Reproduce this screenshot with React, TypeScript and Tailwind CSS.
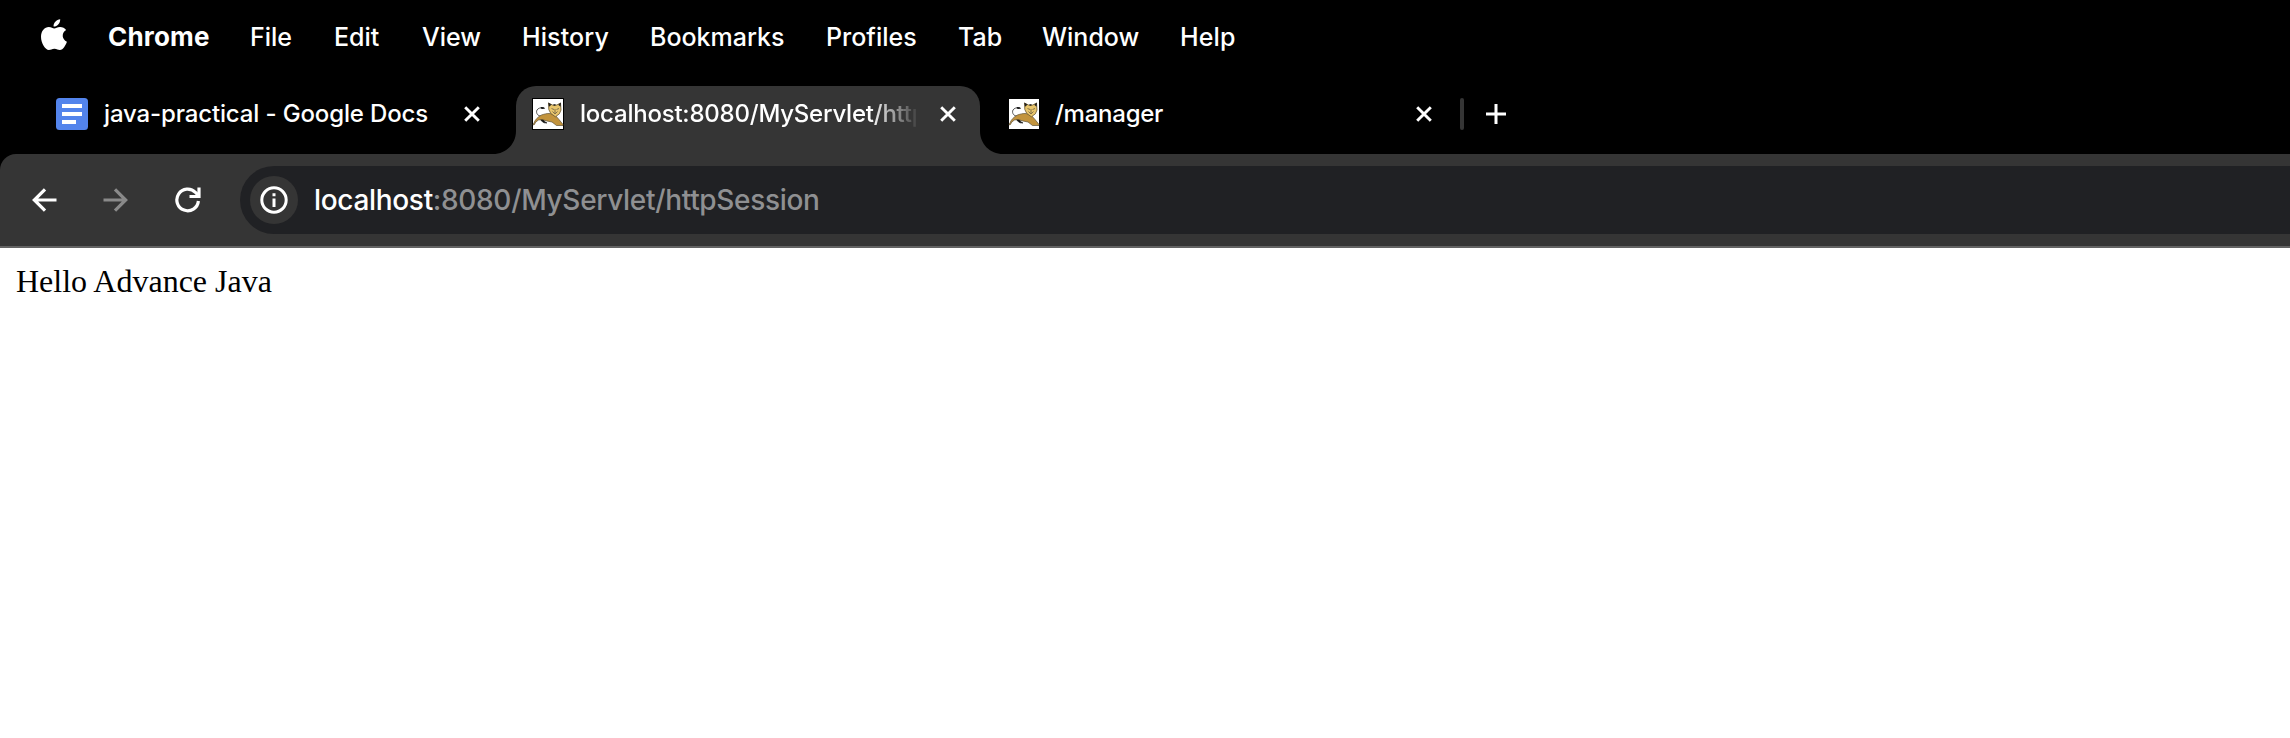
import React from "react";

const menuItems = [
  { label: "Chrome", className: "w-[142px] font-bold text-[26px] tracking-[0.2px]" },
  { label: "File", className: "w-[84px]" },
  { label: "Edit", className: "w-[88px]" },
  { label: "View", className: "w-[100px]" },
  { label: "History", className: "w-[128px] tracking-[0.1px]" },
  { label: "Bookmarks", className: "w-[176px]" },
  { label: "Profiles", className: "w-[132px]" },
  { label: "Tab", className: "w-[84px]" },
  { label: "Window", className: "w-[138px]" },
  { label: "Help", className: "w-[80px] tracking-[0.1px]" },
];

function AppleLogo() {
  return (
    <svg viewBox="0 0 26 32" className="h-8 w-[26px]" fill="#fff">
      <path d="M19.2 0.2c.2 3.7-2.8 7.5-6.6 7.4-.4-3.600 2.900-7 6.600-7.400z" />
      <path d="M13.300 9.500c1.400 0 3-1.600 5.800-1.600 2.400 0 4.700 1.200 6 3.200-5 3-4.200 9.600 .8 11.600-.9 2.700-3.700 8.300-7 8.300-2.100 0-2.900-1.300-5.500-1.300s-3.500 1.300-5.500 1.300C4.300 31 0 24.300 0 17.800 0 11.800 3.700 8 7.800 8c2.500 0 4.100 1.500 5.500 1.500z" />
    </svg>
  );
}

function DocsIcon() {
  return (
    <svg viewBox="0 0 32 32" className="h-8 w-8 shrink-0">
      <rect width="32" height="32" rx="3.500" fill="#5384ec" />
      <path d="M6 6h20v4H6zM6 14h20v4H6zM6 22h14v4H6z" fill="#fff" />
    </svg>
  );
}

function TomcatIcon() {
  return (
    <svg viewBox="0 0 32 32" className="h-8 w-8 shrink-0">
      <rect width="32" height="32" fill="#000" />
      <rect x="1" y="1" width="30" height="30" fill="#fff" />
      <path d="M9.500 18C6 18.500 3.500 15 5 12c1.200-2 3.500-2.300 6-2" fill="none" stroke="#555" strokeWidth="1" />
      <path d="M8.500 9l3.500.2 1 1.500-3.500.3z" fill="#111" />
      <path d="M8 20.500l3.500.5 1 2.500 2.500 1.500-3-.2-2.500-1.800z" fill="#111" stroke="#111" strokeWidth=".6" />
      <path d="M1 26.500l1-1.500c1-3 3.500-6 7.500-8 3-1 5-1.500 7.500-1.500l5 .5 5 5.500 4 5v1h-6.500l-4.500-3.500-5-1-5-1.500-3.500.5-2.500 1.800-2 3.200z" fill="#c2933c" stroke="#5e5236" strokeWidth=".7" />
      <path d="M16.500 5l4 2h4.300l3.700-2 .5 7-1.600 3.800-4 3-4.600-3.300-2-4z" fill="#e8c56c" stroke="#6a572e" strokeWidth=".8" />
      <path d="M16.300 4.500l3.200 2.200-2.500 2zM29 4.500l-2.800 2.200 2.300 2zM21.500 6.300h2v1.500h-2z" fill="#222" />
      <path d="M19.500 10.500l2.500 1M27 10.500l-2.500 1M20.500 13.500l2.500 2.500 2.500-2.500M23 11v4" fill="none" stroke="#776947" strokeWidth=".9" />
    </svg>
  );
}

function CloseIcon() {
  return (
    <svg viewBox="0 0 16 16" className="h-4 w-4 shrink-0" fill="none" stroke="#fff" strokeWidth="2.900">
      <path d="M1.200 1.200l13.600 13.600M14.800 1.200L1.200 14.800" />
    </svg>
  );
}

function MenuBar() {
  return (
    <nav className="flex h-[86px] items-start pl-[41px] text-[25px] font-medium leading-[30px] text-white">
      <div className="w-[67px] pt-[19px]">
        <AppleLogo />
      </div>
      {menuItems.map((m) => (
        <div key={m.label} className={`shrink-0 whitespace-nowrap pt-[22px] leading-[30px] ${m.className}`}>
          {m.label}
        </div>
      ))}
    </nav>
  );
}

function TabStrip() {
  return (
    <div className="flex h-[68px] text-[24px] font-[450] leading-[30px] tracking-[-0.14px] text-white">
      <div className="flex h-14 w-[493px] items-center pl-14">
        <DocsIcon />
        <span className="ml-4 w-[345px] whitespace-nowrap">java-practical - Google Docs</span>
        <span className="ml-[15px] flex"><CloseIcon /></span>
      </div>
      <svg viewBox="0 0 23 23" className="h-[23px] w-[23px] self-end" fill="#353535">
        <path d="M0 23C13 23 23 13 23 0V23Z" />
      </svg>
      <div className="flex w-[464px] rounded-t-[20px] bg-[#353535]">
        <div className="flex h-14 items-center pl-4">
          <TomcatIcon />
          <span className="ml-4 w-[336px] overflow-hidden whitespace-nowrap tracking-[-0.22px] [mask-image:linear-gradient(to_right,#000_290px,transparent_340px)]">
            localhost:8080/MyServlet/httpSession
          </span>
          <span className="ml-6 flex"><CloseIcon /></span>
        </div>
      </div>
      <svg viewBox="0 0 23 23" className="h-[23px] w-[23px] self-end" fill="#353535">
        <path d="M23 23C10 23 0 13 0 0V23Z" />
      </svg>
      <div className="flex h-14 items-center pl-[5px]">
        <TomcatIcon />
        <span className="ml-[15px] w-[361px] whitespace-nowrap tracking-[-0.25px]">/manager</span>
        <CloseIcon />
        <span className="ml-7 h-8 w-1 rounded-full bg-[#353535]" />
        <svg viewBox="0 0 20 20" className="ml-[22px] h-5 w-5" fill="none" stroke="#fff" strokeWidth="3">
          <path d="M10 0v20M0 10h20" />
        </svg>
      </div>
    </div>
  );
}

function Toolbar() {
  return (
    <div className="flex h-[94px] items-start rounded-tl-[16px] border-b-2 border-[#636363] bg-[#353535] pt-3">
      <div className="flex h-[68px] w-60 shrink-0 items-center pl-8">
        <svg viewBox="0 0 25 24" className="h-6 w-[25px]" fill="none" stroke="#fff" strokeWidth="3.200">
          <path d="M24.500 12H2.300M13 1.300L2.300 12 13 22.700" />
        </svg>
        <svg viewBox="0 0 25 24" className="ml-[46px] h-6 w-[25px]" fill="none" stroke="#8a8a8a" strokeWidth="3.200">
          <path d="M.5 12h22.200M12 1.300L22.700 12 12 22.700" />
        </svg>
        <svg viewBox="0 0 26 26" className="ml-[47px] h-[26px] w-[26px]" fill="none" stroke="#fff" strokeWidth="3.200">
          <path d="M23.400 14A10.800 10.800 0 1 1 20.500 5.500L23.500 8.500" />
          <path d="M24 .5v9H14.500" />
        </svg>
      </div>
      <div className="flex h-[68px] flex-1 items-center rounded-l-full bg-[#202124] pl-2.5">
        <div className="flex h-12 w-12 items-center justify-center rounded-full bg-[#353535]">
          <svg viewBox="0 0 28 28" className="h-7 w-7" fill="none" stroke="#fff" strokeWidth="3">
            <circle cx="14" cy="14" r="12.200" />
            <path d="M14 12.500v8.500M14 7.300v3" />
          </svg>
        </div>
        <div className="ml-4 whitespace-nowrap text-[28px] font-[450] leading-9 tracking-[-0.32px] text-[#8f9092]">
          <span className="text-white">localhost</span>:8080/MyServlet/httpSession
        </div>
      </div>
    </div>
  );
}

export default function App() {
  return (
    <div className="flex h-[738px] w-[2290px] flex-col overflow-hidden bg-white font-['Inter',sans-serif]">
      <header className="bg-black">
        <MenuBar />
        <TabStrip />
        <Toolbar />
      </header>
      <main className="px-4 pt-[15px] font-['Liberation_Serif',serif] text-[32px] leading-[37px] text-black">
        Hello Advance Java
      </main>
    </div>
  );
}
